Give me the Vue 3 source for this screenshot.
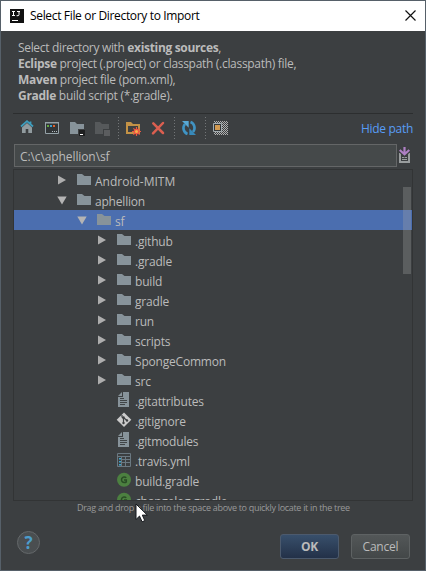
<script setup>
const rows = [
  { name: 'Android-MITM', kind: 'folder', level: 0, arrow: 'closed', wide: true },
  { name: 'aphellion', kind: 'folder', level: 0, arrow: 'open' },
  { name: 'sf', kind: 'folder', level: 1, arrow: 'open', selected: true },
  { name: '.github', kind: 'folder', level: 2, arrow: 'closed' },
  { name: '.gradle', kind: 'folder', level: 2, arrow: 'closed' },
  { name: 'build', kind: 'folder', level: 2, arrow: 'closed' },
  { name: 'gradle', kind: 'folder', level: 2, arrow: 'closed' },
  { name: 'run', kind: 'folder', level: 2, arrow: 'closed' },
  { name: 'scripts', kind: 'folder', level: 2, arrow: 'closed' },
  { name: 'SpongeCommon', kind: 'folder', level: 2, arrow: 'closed' },
  { name: 'src', kind: 'folder', level: 2, arrow: 'closed' },
  { name: '.gitattributes', kind: 'text', level: 2 },
  { name: '.gitignore', kind: 'git', level: 2 },
  { name: '.gitmodules', kind: 'text', level: 2 },
  { name: '.travis.yml', kind: 'table', level: 2 },
  { name: 'build.gradle', kind: 'gradle', level: 2 },
  { name: 'changelog.gradle', kind: 'gradle', level: 2 },
]
</script>

<template>
  <div class="dialog">
    <header class="titlebar">
      <svg class="logo" width="14" height="14" viewBox="0 0 14 14">
        <rect width="14" height="14" fill="#111" />
        <path d="M2 2.500h3M3.500 2.500v4M2 6.500h3M7 2.500h3M9 2.500v3.200q0 1-1 1H6.600M2 11.500h6" fill="none" stroke="#fff" stroke-width="1" />
      </svg>
      <h1>Select File or Directory to Import</h1>
      <svg class="close" width="11" height="11" viewBox="0 0 11 11"><path d="M.5.5l10 10M10.500.5l-10 10" stroke="#111" stroke-width="1.200" /></svg>
    </header>

    <section class="intro">
      <p class="l1">Select directory with <b>existing sources</b>,</p>
      <p class="l2"><b>Eclipse</b> project (.project) or classpath (.classpath) file,</p>
      <p class="l3"><b>Maven</b> project file (pom.xml),</p>
      <p class="l4"><b>Gradle</b> build script (*.gradle).</p>
    </section>

    <nav class="toolbar">
      <svg class="tool" viewBox="0 0 25 22">
        <path d="M7 10.500l5-4.500 5 4.500V16h-3.700v-4h-2.600v4H7z" fill="#919b9f" />
        <path d="M6 9.500l6-5.300 6 5.300M15.500 4.500v3" fill="none" stroke="#3d9dbd" stroke-width="1.800" />
      </svg>
      <svg class="tool" viewBox="0 0 25 22">
        <path d="M5.500 5.500h13v11h-13z" fill="#313537" stroke="#94a1a7" />
        <path d="M5 5h14v1.500H5z" fill="#94a1a7" />
        <path d="M7 8h2v2H7z" fill="#62a83e" /><path d="M10 8h2v2h-2z" fill="#3b9fd0" /><path d="M13 8h2v2h-2z" fill="#e0622e" />
        <path d="M12 14h1v1h-1zM14 14h1v1h-1zM16 14h1v1h-1z" fill="#b4bcc0" />
      </svg>
      <svg class="tool" viewBox="0 0 25 22">
        <path d="M5 5h5l2 2h7v10H5z" fill="#87939a" />
        <path d="M13 12h7v7h-7z" fill="#3c3f41" /><path d="M14 13h6v6h-6z" fill="#1e1f20" /><path d="M15 17h3v1h-3z" fill="#fff" />
      </svg>
      <svg class="tool" viewBox="0 0 25 22">
        <path d="M5 5h5l2 2h7v10H5z" fill="#56595b" />
        <path d="M13 12h7v7h-7z" fill="#3c3f41" /><path d="M14 13h6v6h-6z" fill="#5b5d5f" />
      </svg>
      <i class="sep"></i>
      <svg class="tool" viewBox="0 0 25 22">
        <path d="M5 5h5l2 2h7v10H5z" fill="#c39246" />
        <path d="M7 9h10v6H7z" fill="#3f4040" />
        <path d="M15.500 10v9M11 14.500h9M12.400 11.400l6.200 6.200M18.600 11.400l-6.200 6.200" stroke="#ed5742" stroke-width="1.200" />
        <circle cx="15.500" cy="14.500" r="2.800" fill="#ed5742" /><circle cx="15.500" cy="14.500" r="1.500" fill="#f6b04a" />
      </svg>
      <svg class="tool" viewBox="0 0 25 22"><path d="M7.300 6.300l9.700 9.700M17 6L7 16.300" stroke="#db5f50" stroke-width="2.500" stroke-linecap="round" /></svg>
      <i class="sep"></i>
      <svg class="tool" viewBox="0 0 25 22">
        <path d="M10.500 17A6.300 6.300 0 0 1 8 7" fill="none" stroke="#3f94c5" stroke-width="2.600" />
        <path d="M5 4h6.700v6.700z" fill="#58a8d4" />
        <path d="M13.500 5A6.300 6.300 0 0 1 16 15" fill="none" stroke="#4193c2" stroke-width="2.600" />
        <path d="M19 18h-6.700v-6.700z" fill="#3789ba" />
      </svg>
      <i class="sep"></i>
      <svg class="tool" viewBox="0 0 25 22">
        <defs><pattern id="checks" width="2" height="2" patternUnits="userSpaceOnUse"><path d="M0 0h1v1H0zM1 1h1v1H1z" fill="#b0b0b0" /></pattern></defs>
        <path d="M6 4h14v14H6z" fill="url(#checks)" />
        <path d="M5.500 6.500h8v8h-8z" fill="#35383a" stroke="#a4adb1" /><path d="M7 8h5v5H7z" fill="#d29a51" />
      </svg>
      <a class="hide">Hide path</a>
    </nav>

    <div class="pathrow">
      <div class="field">C:\c\aphellion\sf</div>
      <svg class="import" width="11" height="16" viewBox="0 0 11 16">
        <path d="M1 6v9h9V6" fill="none" stroke="#999d9e" stroke-width="2" />
        <path d="M3 10.500h5M3 12.500h5" stroke="#999d9e" />
        <path d="M5.500 0v7M.7 3l4.800 4.800L10.300 3" fill="none" stroke="#3c3f41" stroke-width="4" />
        <path d="M5.500 0v7M.7 3l4.800 4.300L10.300 3" fill="none" stroke="#ae80c4" stroke-width="2.200" />
      </svg>
    </div>

    <main class="tree">
      <div v-for="row in rows" :key="row.name" class="row" :class="['level' + row.level, { selected: row.selected, wide: row.wide }]">
        <span class="arrow">
          <svg v-if="row.arrow === 'closed'" width="10" height="10" viewBox="0 0 10 10"><path d="M1 .5l8 4.500-8 4.500z" fill="#adadad" /></svg>
          <svg v-else-if="row.arrow === 'open'" width="10" height="10" viewBox="0 0 10 10"><path d="M.3 1.500h9.400L5 9.500z" fill="#b4b4b4" /></svg>
        </span>
        <svg class="icon" width="16" height="16" viewBox="0 0 16 16">
          <path v-if="row.kind === 'folder'" class="folder" d="M1 2h5l2.500 2H15v9H1z" />
          <g v-else-if="row.kind === 'text'">
            <path d="M7 0h6v15H2V5h5z" fill="#87939a" /><path d="M6 0v4H2z" fill="#87939a" />
            <path d="M4 6.500h4M4 8.500h7M4 10.500h7M4 12.500h5" stroke="#414547" />
          </g>
          <g v-else-if="row.kind === 'git'">
            <path d="M8 .5l7.300 7.300L8 15 .7 7.800z" fill="#cbcbcb" />
            <path d="M6 3v2l1.500 1.500V11M8 6l3 2.500" fill="none" stroke="#3c3f41" stroke-width="1.200" />
            <circle cx="7.500" cy="11" r="1.200" fill="#3c3f41" /><circle cx="11" cy="8.500" r="1.200" fill="#3c3f41" /><circle cx="7.500" cy="5.500" r="1.200" fill="#3c3f41" />
          </g>
          <g v-else-if="row.kind === 'table'">
            <path d="M1.500 1.500h13v13h-13zM1 4.500h14M5.500 4v10M9.500 4v10M5 7.500h9M5 10.500h9" fill="none" stroke="#6b7982" />
            <path d="M3 6h2v1.500H3zM3 9h2v1.500H3zM3 12h2v1.500H3z" fill="#3fa5cd" />
          </g>
          <g v-else>
            <circle cx="8" cy="7.800" r="7" fill="#4c8040" />
            <path d="M10.300 5.700Q8.900 4.500 7.200 5.100Q5.200 6 5.500 8.200Q6 10.600 8.200 10.600Q9.600 10.600 10.300 9.900V8H8" fill="none" stroke="#294b25" stroke-width="1.500" />
          </g>
        </svg>
        <span class="name">{{ row.name }}</span>
      </div>
      <div class="thumb"></div>
    </main>
    <p class="hint">Drag and drop a file into the space above to quickly locate it in the tree</p>

    <footer class="footer">
      <span class="help">?</span>
      <button class="btn ok">OK</button>
      <button class="btn">Cancel</button>
    </footer>

    <svg class="cursor" width="14" height="20" viewBox="0 0 14 20"><path d="M1 1v15.500l3.500-3.400 2.600 5.700 2.700-1.200-2.500-5.500h5z" fill="#fff" stroke="#15181c" /></svg>
  </div>
</template>

<style>
body { margin: 0; }
</style>

<style scoped>
* { box-sizing: border-box; }
.dialog { position: relative; width: 426px; height: 571px; border: 1px solid #566069; background: #3c3f41; color: #bbb; font: 12px/16px "Open Sans", "Noto Sans", sans-serif; display: flex; flex-direction: column; overflow: hidden; }
svg { display: block; flex: none; }
p, h1 { margin: 0; white-space: nowrap; }
b { font-weight: 700; }
.titlebar { height: 30px; flex: none; background: #fff; color: #000; display: flex; align-items: center; padding: 0 9px; }
h1 { flex: 1; margin-left: 6px; font-size: 12px; font-weight: 400; letter-spacing: -0.34px; }
.close { margin-bottom: 2px; }
.intro { height: 82px; flex: none; padding: 9px 17px 0; }
.l1 { letter-spacing: -0.33px; }
.l2 { letter-spacing: -0.3px; }
.l3 { letter-spacing: -0.27px; }
.l4 { letter-spacing: -0.29px; }
.toolbar { height: 31px; flex: none; margin: 0 12px; border-top: 1px solid #2c2e2f; padding: 3px 0 0 2px; display: flex; align-items: flex-start; }
.tool { width: 25px; height: 22px; }
.sep { width: 6px; height: 23px; display: flex; justify-content: center; }
.sep::before { content: ""; width: 1px; height: 23px; background: repeating-linear-gradient(#727577 0 1px, transparent 1px 3px); }
.hide { margin-left: auto; color: #589df6; line-height: 24px; letter-spacing: -0.3px; }
.pathrow { height: 25px; flex: none; padding-left: 13px; display: flex; align-items: flex-start; }
.field { width: 383px; height: 23px; border: 1px solid #646667; background: #45494a; padding-left: 5px; line-height: 23px; letter-spacing: -0.1px; }
.import { margin: 3px 0 0 2px; }
.tree { position: relative; height: 332px; flex: none; margin: 0 12px; border: 1px solid #323435; overflow: hidden; }
.row { height: 20px; display: flex; align-items: center; letter-spacing: -0.2px; }
.wide { letter-spacing: 0; }
.level0 { padding-left: 43px; }
.level1 { padding-left: 63px; }
.level2 { padding-left: 83px; }
.selected { background: #4b6eaf; }
.arrow { width: 19px; flex: none; }
.icon { margin-bottom: 1px; }
.folder { fill: #87939a; }
.name { margin-left: 3px; line-height: 18px; padding-top: 3px; }
.thumb { position: absolute; right: 1px; top: 17px; width: 8px; height: 87px; background: rgba(166, 166, 166, 0.3); }
.hint { height: 14px; flex: none; line-height: 13px; font-size: 9px; color: #999; padding-left: 76px; letter-spacing: -0.31px; }
.footer { flex: 1; display: flex; align-items: flex-start; padding: 16px 15px 0 16px; }
.help { width: 23px; height: 23px; border: 1px solid #64686a; border-radius: 50%; background: #4a4e50; color: #4c9dcc; font-weight: 700; font-size: 17px; line-height: 21px; text-align: center; margin-right: auto; }
.btn { width: 59px; height: 25px; margin-top: 3px; margin-left: 12px; padding: 0; border: 1px solid #5e6263; border-radius: 3px; background: linear-gradient(#535758, #434748); color: #bbb; font: 12px/23px "Open Sans", sans-serif; letter-spacing: -0.2px; }
.ok { margin-left: 0; border-color: #4c5a6d; background: linear-gradient(#384f6b, #233148); font-weight: 700; }
.cursor { position: absolute; left: 134px; top: 502px; }
</style>
